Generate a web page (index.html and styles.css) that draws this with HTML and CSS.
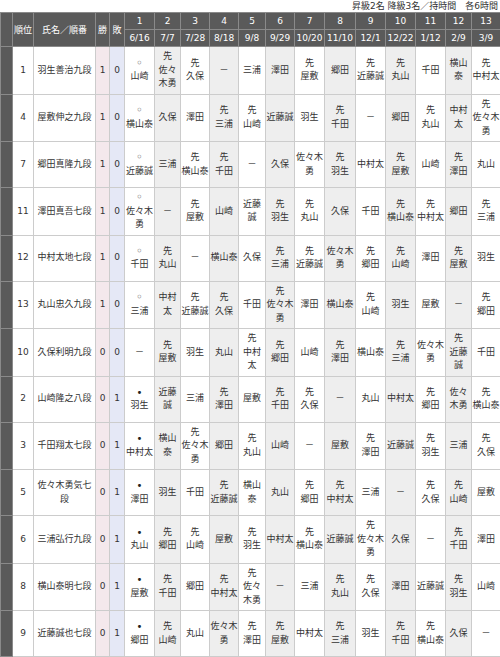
FILE: index.html
```html
<!DOCTYPE html>
<html lang="ja">
<head>
<meta charset="utf-8">
<title>順位戦</title>
<link rel="stylesheet" href="styles.css">
</head>
<body>
<div class="caption">昇級2名 降級3名／持時間　各6時間</div>
<table class="league">
<colgroup>
<col class="c-side"><col class="c-rank"><col class="c-name"><col class="c-win"><col class="c-loss">
<col class="r w30"><col class="r even w26"><col class="r w29"><col class="r even w29"><col class="r w27"><col class="r even w29"><col class="r w30"><col class="r even w31"><col class="r w30"><col class="r even w30"><col class="r w30"><col class="r even w26"><col class="r w29">
</colgroup>
<thead>
<tr><th class="side" rowspan="2"></th><th rowspan="2">順位</th><th rowspan="2">氏名／順番</th><th rowspan="2">勝</th><th rowspan="2">敗</th><th>1</th><th>2</th><th>3</th><th>4</th><th>5</th><th>6</th><th>7</th><th>8</th><th>9</th><th>10</th><th>11</th><th>12</th><th>13</th></tr>
<tr><th>6/16</th><th>7/7</th><th>7/28</th><th>8/18</th><th>9/8</th><th>9/29</th><th>10/20</th><th>11/10</th><th>12/1</th><th>12/22</th><th>1/12</th><th>2/9</th><th>3/9</th></tr>
</thead>
<tbody>
<tr><td class="side"></td><td>1</td><td>羽生善治九段</td><td>1</td><td>0</td><td><span class="mk win">◦</span><br>山崎</td><td>先<br>佐々木勇</td><td>先<br>久保</td><td>－</td><td>三浦</td><td>澤田</td><td>先<br>屋敷</td><td>郷田</td><td>先<br>近藤誠</td><td>先<br>丸山</td><td>千田</td><td>横山泰</td><td>先<br>中村太</td></tr>
<tr><td class="side"></td><td>4</td><td>屋敷伸之九段</td><td>1</td><td>0</td><td><span class="mk win">◦</span><br>横山泰</td><td>久保</td><td>澤田</td><td>先<br>三浦</td><td>先<br>山崎</td><td>近藤誠</td><td>羽生</td><td>先<br>千田</td><td>－</td><td>郷田</td><td>先<br>丸山</td><td>中村太</td><td>先<br>佐々木勇</td></tr>
<tr><td class="side"></td><td>7</td><td>郷田真隆九段</td><td>1</td><td>0</td><td><span class="mk win">◦</span><br>近藤誠</td><td>三浦</td><td>先<br>横山泰</td><td>先<br>千田</td><td>－</td><td>久保</td><td>佐々木勇</td><td>先<br>羽生</td><td>中村太</td><td>先<br>屋敷</td><td>山崎</td><td>先<br>澤田</td><td>丸山</td></tr>
<tr><td class="side"></td><td>11</td><td>澤田真吾七段</td><td>1</td><td>0</td><td><span class="mk win">◦</span><br>佐々木勇</td><td>－</td><td>先<br>屋敷</td><td>山崎</td><td>近藤誠</td><td>先<br>羽生</td><td>先<br>丸山</td><td>久保</td><td>千田</td><td>先<br>横山泰</td><td>先<br>中村太</td><td>郷田</td><td>先<br>三浦</td></tr>
<tr><td class="side"></td><td>12</td><td>中村太地七段</td><td>1</td><td>0</td><td><span class="mk win">◦</span><br>千田</td><td>先<br>丸山</td><td>－</td><td>横山泰</td><td>久保</td><td>先<br>三浦</td><td>先<br>近藤誠</td><td>佐々木勇</td><td>先<br>郷田</td><td>先<br>山崎</td><td>澤田</td><td>先<br>屋敷</td><td>羽生</td></tr>
<tr><td class="side"></td><td>13</td><td>丸山忠久九段</td><td>1</td><td>0</td><td><span class="mk win">◦</span><br>三浦</td><td>中村太</td><td>先<br>近藤誠</td><td>先<br>久保</td><td>千田</td><td>先<br>佐々木勇</td><td>澤田</td><td>横山泰</td><td>先<br>山崎</td><td>羽生</td><td>屋敷</td><td>－</td><td>先<br>郷田</td></tr>
<tr><td class="side"></td><td>10</td><td>久保利明九段</td><td>0</td><td>0</td><td>－</td><td>先<br>屋敷</td><td>羽生</td><td>丸山</td><td>先<br>中村太</td><td>先<br>郷田</td><td>山崎</td><td>先<br>澤田</td><td>横山泰</td><td>先<br>三浦</td><td>佐々木勇</td><td>先<br>近藤誠</td><td>千田</td></tr>
<tr><td class="side"></td><td>2</td><td>山崎隆之八段</td><td>0</td><td>1</td><td><span class="mk loss">•</span><br>羽生</td><td>近藤誠</td><td>三浦</td><td>先<br>澤田</td><td>屋敷</td><td>先<br>千田</td><td>先<br>久保</td><td>－</td><td>丸山</td><td>中村太</td><td>先<br>郷田</td><td>佐々木勇</td><td>先<br>横山泰</td></tr>
<tr><td class="side"></td><td>3</td><td>千田翔太七段</td><td>0</td><td>1</td><td><span class="mk loss">•</span><br>中村太</td><td>横山泰</td><td>先<br>佐々木勇</td><td>郷田</td><td>先<br>丸山</td><td>山崎</td><td>－</td><td>屋敷</td><td>先<br>澤田</td><td>近藤誠</td><td>先<br>羽生</td><td>三浦</td><td>先<br>久保</td></tr>
<tr><td class="side"></td><td>5</td><td>佐々木勇気七段</td><td>0</td><td>1</td><td><span class="mk loss">•</span><br>澤田</td><td>羽生</td><td>千田</td><td>先<br>近藤誠</td><td>横山泰</td><td>丸山</td><td>先<br>郷田</td><td>先<br>中村太</td><td>三浦</td><td>－</td><td>先<br>久保</td><td>先<br>山崎</td><td>屋敷</td></tr>
<tr><td class="side"></td><td>6</td><td>三浦弘行九段</td><td>0</td><td>1</td><td><span class="mk loss">•</span><br>丸山</td><td>先<br>郷田</td><td>先<br>山崎</td><td>屋敷</td><td>先<br>羽生</td><td>中村太</td><td>先<br>横山泰</td><td>近藤誠</td><td>先<br>佐々木勇</td><td>久保</td><td>－</td><td>先<br>千田</td><td>澤田</td></tr>
<tr><td class="side"></td><td>8</td><td>横山泰明七段</td><td>0</td><td>1</td><td><span class="mk loss">•</span><br>屋敷</td><td>先<br>千田</td><td>郷田</td><td>先<br>中村太</td><td>先<br>佐々木勇</td><td>－</td><td>三浦</td><td>先<br>丸山</td><td>先<br>久保</td><td>澤田</td><td>近藤誠</td><td>先<br>羽生</td><td>山崎</td></tr>
<tr><td class="side"></td><td>9</td><td>近藤誠也七段</td><td>0</td><td>1</td><td><span class="mk loss">•</span><br>郷田</td><td>先<br>山崎</td><td>丸山</td><td>佐々木勇</td><td>先<br>澤田</td><td>先<br>屋敷</td><td>中村太</td><td>先<br>三浦</td><td>羽生</td><td>先<br>千田</td><td>先<br>横山泰</td><td>久保</td><td>－</td></tr>
</tbody>
</table>
</body>
</html>
```

FILE: styles.css
```css
html, body {
  margin: 0;
  padding: 0;
  background: #fff;
}
body {
  font-family: "DejaVu Sans", "Noto Sans CJK JP", sans-serif;
  font-size: 9px;
  color: #333;
}
.caption {
  height: 12px;
  line-height: 12px;
  text-align: right;
  padding-right: 2px;
  color: #333;
  white-space: nowrap;
}
.league {
  border-collapse: collapse;
  table-layout: fixed;
  width: 500px;
}
.c-side { width: 12px; }
.c-rank { width: 21px; }
.c-name { width: 62px; }
.c-win { width: 14px; background: #f4e8ec; }
.c-loss { width: 15px; background: #e5e8f6; }
.w26 { width: 26px; }
.w27 { width: 27px; }
.w29 { width: 29px; }
.w30 { width: 30px; }
.w31 { width: 31px; }
.even { background: #eeeeee; }
.league th {
  background: #5a5a5a;
  color: #fff;
  font-weight: normal;
  border: 1px solid #8a8a8a;
  height: 16px;
  line-height: 16px;
  padding: 0;
  text-align: center;
  white-space: nowrap;
}
.league td {
  border: 1px solid #cccccc;
  height: 39px;
  padding: 3px 0;
  line-height: 13.5px;
  text-align: center;
  vertical-align: middle;
  word-break: normal;
}
.league td:nth-child(3) {
  padding: 3px 2px;
}
.league td.side {
  background: #5a5a5a;
  border-color: #8a8a8a;
}
.mk {
  display: inline-block;
  height: 13.5px;
  line-height: 13.5px;
  vertical-align: top;
}
.mk.win {
  font-size: 12px;
  color: #666;
}
.mk.loss {
  font-size: 10px;
  color: #222;
}
```
